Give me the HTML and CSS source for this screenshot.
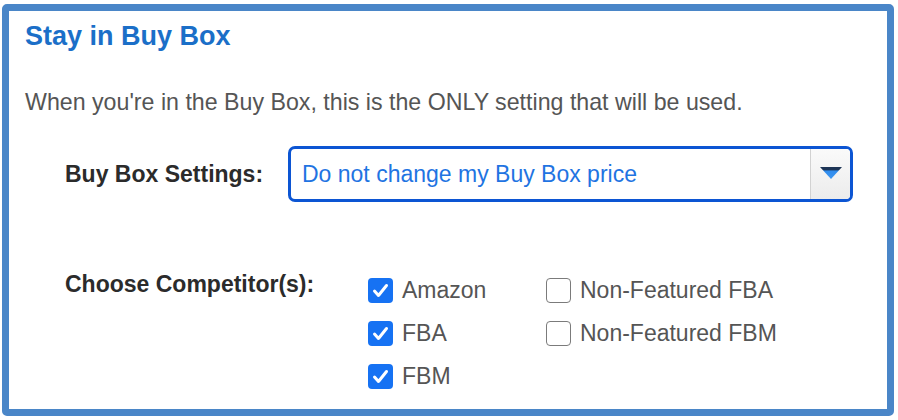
FILE: index.html
```html
<!DOCTYPE html>
<html>
<head>
<meta charset="utf-8">
<link rel="stylesheet" href="styles.css">
</head>
<body>
<div class="frame">
  <h2 class="title">Stay in Buy Box</h2>
  <p class="desc">When you're in the Buy Box, this is the ONLY setting that will be used.</p>
  <div class="row row-select">
    <div class="label">Buy Box Settings:</div>
    <div class="select">
      <div class="select-value">Do not change my Buy Box price</div>
      <div class="select-arrow">
        <svg width="24" height="14" viewBox="0 0 24 14">
          <defs>
            <linearGradient id="ag" x1="0" y1="0" x2="0" y2="1">
              <stop offset="0" stop-color="#1d3556"/>
              <stop offset="0.22" stop-color="#1d3556"/>
              <stop offset="0.34" stop-color="#2f8cee"/>
              <stop offset="1" stop-color="#3e97f0"/>
            </linearGradient>
          </defs>
          <polygon points="1,1 23,1 12,13" fill="url(#ag)"/>
        </svg>
      </div>
    </div>
  </div>
  <div class="row row-comp">
    <div class="label label-comp">Choose Competitor(s):</div>
    <div class="checks">
      <label class="check"><span class="box on"><svg width="25" height="25" viewBox="0 0 25 25"><path d="M6.5 13 L10.5 17.5 L18.5 7.5" fill="none" stroke="#fff" stroke-width="3" stroke-linecap="round" stroke-linejoin="round"/></svg></span><span class="ctext">Amazon</span></label>
      <label class="check"><span class="box"></span><span class="ctext">Non-Featured FBA</span></label>
      <label class="check"><span class="box on"><svg width="25" height="25" viewBox="0 0 25 25"><path d="M6.5 13 L10.5 17.5 L18.5 7.5" fill="none" stroke="#fff" stroke-width="3" stroke-linecap="round" stroke-linejoin="round"/></svg></span><span class="ctext">FBA</span></label>
      <label class="check"><span class="box"></span><span class="ctext">Non-Featured FBM</span></label>
      <label class="check"><span class="box on"><svg width="25" height="25" viewBox="0 0 25 25"><path d="M6.5 13 L10.5 17.5 L18.5 7.5" fill="none" stroke="#fff" stroke-width="3" stroke-linecap="round" stroke-linejoin="round"/></svg></span><span class="ctext">FBM</span></label>
    </div>
  </div>
</div>
</body>
</html>
```
FILE: styles.css
```css
* { box-sizing: border-box; }
html, body { margin: 0; padding: 0; background: #fff; }
body {
  font-family: "Liberation Sans", Arial, Helvetica, sans-serif;
  width: 898px;
  height: 420px;
  overflow: hidden;
}
.frame {
  margin: 4px 0 0 2px;
  width: 892px;
  height: 412px;
  border: 7px solid #4a86c8;
  border-radius: 5px;
  padding: 10px 0 0 0;
}
.title {
  margin: 0;
  padding-left: 16px;
  font-size: 27px;
  line-height: 30px;
  font-weight: bold;
  color: #1b6fc8;
}
.desc {
  margin: 37px 0 0 0;
  padding-left: 16px;
  font-size: 23.2px;
  line-height: 28px;
  color: #555;
}
.row {
  display: flex;
  padding-left: 56px;
}
.row-select {
  margin-top: 30px;
  align-items: center;
}
.label {
  width: 223px;
  flex: none;
  font-size: 23px;
  font-weight: bold;
  color: #2b2b2b;
  line-height: 25px;
  white-space: nowrap;
}
.select {
  width: 565px;
  height: 56px;
  border: 3px solid #0c55d3;
  border-radius: 7px;
  display: flex;
  overflow: hidden;
  background: #fff;
}
.select-value {
  flex: 1;
  display: flex;
  align-items: center;
  padding-left: 11px;
  font-size: 23px;
  color: #1f74e2;
}
.select-arrow {
  width: 40px;
  flex: none;
  border-left: 1px solid #d2d2d2;
  background: linear-gradient(#fafafa, #ececec);
  display: flex;
  align-items: center;
  justify-content: center;
  padding-bottom: 2px;
}
.row-comp {
  margin-top: 70px;
  align-items: flex-start;
}
.label-comp { width: 223px; }
.checks {
  margin-left: 80px;
  padding-top: 6px;
  display: grid;
  grid-template-columns: 178px auto;
  grid-auto-rows: 43px;
}
.check {
  display: flex;
  align-items: flex-start;
  font-size: 23px;
  color: #555;
  line-height: 25px;
}
.box {
  width: 25px;
  height: 25px;
  flex: none;
  border: 1.5px solid #7b7b7b;
  border-radius: 4px;
  background: #fff;
  display: block;
}
.box.on {
  background: #1672f3;
  border-color: #1672f3;
  border-width: 0;
}
.box svg { display: block; }
.ctext {
  margin-left: 9px;
  margin-top: 0;
}
```
